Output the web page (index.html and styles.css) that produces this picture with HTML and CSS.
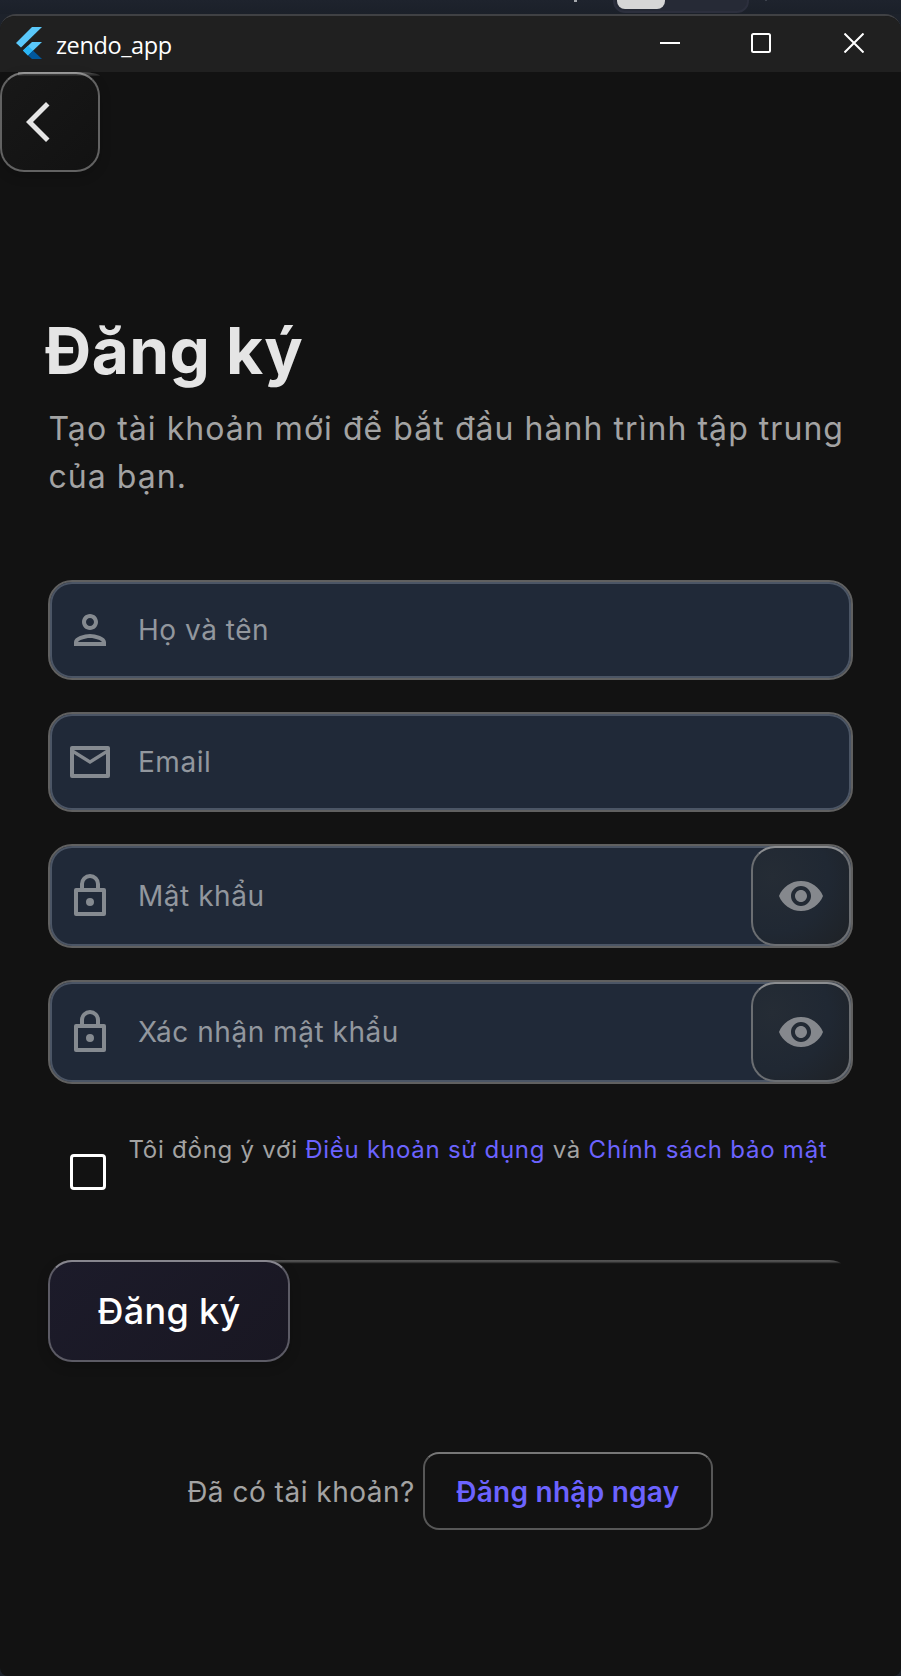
FILE: index.html
```html
<!DOCTYPE html>
<html lang="vi">
<head>
<meta charset="utf-8">
<title>zendo_app</title>
<link rel="stylesheet" href="styles.css">
</head>
<body>
<div class="desktop">
  <span class="desk-mark"></span>
  <span class="desk-mark desk-mark-right"></span>
  <div class="desk-pill"><span class="desk-thumb"></span></div>
</div>
<div class="window">
  <header class="titlebar">
    <svg class="logo" width="26" height="32" viewBox="0 0 26 32">
      <path fill="#5ac8fa" d="M16 0h10L5 20.500 0 16z"/>
      <path fill="#5ac8fa" d="M16 15h10L12 28.500 7 23.500z"/>
      <path fill="#29b6f6" d="M12 18.700l5 4.900-5 4.900-5-4.900z"/>
      <path fill="#01579b" d="M12 28.500l5-4.900 9 8.400H16z"/>
    </svg>
    <span class="app-name">zendo_app</span>
    <div class="controls">
      <svg width="20" height="20" viewBox="0 0 20 20"><path d="M0 10h20"/></svg>
      <svg width="20" height="20" viewBox="0 0 20 20"><rect x="1" y="1" width="18" height="18" rx="1.500"/></svg>
      <svg width="20" height="20" viewBox="0 0 20 20"><path d="M.5.5l19 19M19.500.5l-19 19"/></svg>
    </div>
  </header>
  <main class="content">
    <button class="glass back" aria-label="Back">
      <svg width="24" height="40" viewBox="0 0 24 40"><path fill="#e5e5e5" d="M23.500 3.500L20 0 0 20l20 20 3.500-3.500L7 20z"/></svg>
    </button>
    <div class="form">
      <h1 class="title">Đăng ký</h1>
      <p class="subtitle">Tạo tài khoản mới để bắt đầu hành trình tập trung của bạn.</p>
      <div class="fields">
        <div class="field">
          <svg class="icon" width="48" height="48" viewBox="0 0 24 24"><path d="M12 6c1.100 0 2 .9 2 2s-.9 2-2 2-2-.9-2-2 .9-2 2-2m0 10c2.700 0 5.800 1.290 6 2H6c.23-.72 3.310-2 6-2m0-12C9.790 4 8 5.790 8 8s1.790 4 4 4 4-1.790 4-4-1.790-4-4-4zm0 10c-2.670 0-8 1.340-8 4v2h16v-2c0-2.660-5.330-4-8-4z"/></svg>
          <span class="hint">Họ và tên</span>
        </div>
        <div class="field">
          <svg class="icon" width="48" height="48" viewBox="0 0 24 24"><path fill-rule="evenodd" d="M3 4h18q1 0 1 1v14q0 1-1 1H3q-1 0-1-1V5q0-1 1-1zM4 8v10h16V8l-8 5zM4 6l8 5 8-5z"/></svg>
          <span class="hint">Email</span>
        </div>
        <div class="field tall">
          <svg class="icon" width="48" height="48" viewBox="0 0 24 24"><path fill-rule="evenodd" d="M19 8h-2V6A5 5 0 0 0 7 6v2H5q-1 0-1 1v12q0 1 1 1h14q1 0 1-1V9q0-1-1-1zM9 6a3 3 0 0 1 6 0v2H9zM18 20H6V10h12zM12 17a2 2 0 1 0 0-4 2 2 0 0 0 0 4z"/></svg>
          <span class="hint">Mật khẩu</span>
          <button class="glass reveal" aria-label="Show"><svg width="48" height="48" viewBox="0 0 24 24"><path d="M12 4.500C7 4.500 2.730 7.610 1 12c1.730 4.390 6 7.500 11 7.500s9.270-3.110 11-7.500c-1.730-4.390-6-7.500-11-7.500zM12 17c-2.760 0-5-2.240-5-5s2.240-5 5-5 5 2.240 5 5-2.240 5-5 5zm0-8c-1.660 0-3 1.340-3 3s1.340 3 3 3 3-1.340 3-3-1.340-3-3-3z"/></svg></button>
        </div>
        <div class="field tall">
          <svg class="icon" width="48" height="48" viewBox="0 0 24 24"><path fill-rule="evenodd" d="M19 8h-2V6A5 5 0 0 0 7 6v2H5q-1 0-1 1v12q0 1 1 1h14q1 0 1-1V9q0-1-1-1zM9 6a3 3 0 0 1 6 0v2H9zM18 20H6V10h12zM12 17a2 2 0 1 0 0-4 2 2 0 0 0 0 4z"/></svg>
          <span class="hint">Xác nhận mật khẩu</span>
          <button class="glass reveal" aria-label="Show"><svg width="48" height="48" viewBox="0 0 24 24"><path d="M12 4.500C7 4.500 2.730 7.610 1 12c1.730 4.390 6 7.500 11 7.500s9.270-3.110 11-7.500c-1.730-4.390-6-7.500-11-7.500zM12 17c-2.760 0-5-2.240-5-5s2.240-5 5-5 5 2.240 5 5-2.240 5-5 5zm0-8c-1.660 0-3 1.340-3 3s1.340 3 3 3 3-1.340 3-3-1.340-3-3-3z"/></svg></button>
        </div>
      </div>
      <div class="terms">
        <span class="checkbox"></span>
        <p class="terms-text">Tôi đồng ý với <a>Điều khoản sử dụng</a> và <a>Chính sách bảo mật</a></p>
      </div>
      <div class="submit-row">
        <button class="glass submit">Đăng ký</button>
      </div>
      <div class="login-row">
        <span class="login-text">Đã có tài khoản?</span>
        <button class="glass login">Đăng nhập ngay</button>
      </div>
    </div>
  </main>
</div>
</body>
</html>
```

FILE: styles.css
```css
* { box-sizing: border-box; }
body {
  margin: 0;
  width: 901px;
  height: 1676px;
  overflow: hidden;
  background: #1d222b;
  font-family: Inter, "Noto Sans", sans-serif;
}
button {
  font-family: inherit;
  margin: 0;
  padding: 0;
}
.desktop {
  position: relative;
  height: 14px;
  background: linear-gradient(#1e232d, #1b2029);
}
.desk-pill {
  position: absolute;
  left: 613px;
  top: -20px;
  width: 136px;
  height: 33px;
  border: 2px solid #2c2f3d;
  border-radius: 12px;
  background: #262a36;
}
.desk-thumb {
  position: absolute;
  left: 2px;
  top: 0;
  width: 48px;
  height: 27px;
  border-radius: 8px;
  background: #d6d6d6;
}
.desk-mark {
  position: absolute;
  left: 574px;
  top: 0;
  width: 3px;
  height: 2px;
  background: #a5a8ad;
}
.desk-mark-right {
  left: 765px;
  width: 2px;
  height: 1px;
  background: #3c414c;
}
.window {
  height: 1662px;
  border-top: 2px solid #404144;
  border-radius: 16px 16px 8px 8px;
  background: #121212;
  overflow: hidden;
}
.titlebar {
  display: flex;
  align-items: center;
  height: 56px;
  padding-left: 16px;
  background: #202020;
}
.logo { margin-top: -2px; }
.app-name {
  margin: 1px 0 0 14px;
  color: #fff;
  font: 23.500px/32px "Open Sans", "Noto Sans", sans-serif;
  letter-spacing: -0.4px;
}
.controls {
  display: flex;
  gap: 73px;
  margin: 0 37px 2px auto;
}
.controls svg {
  fill: none;
  stroke: #fff;
  stroke-width: 2;
}
.controls svg:nth-child(2) { margin-left: -2px; }
.content { height: 1604px; }
.glass {
  display: flex;
  align-items: center;
  border: 2px solid #626262;
  border-radius: 24px;
  box-shadow: 0 4px 12px rgba(0, 0, 0, .18);
}
.back {
  position: relative;
  width: 100px;
  height: 100px;
  padding-left: 24px;
  border-top-color: #747474;
  background: linear-gradient(135deg, #181818, #121212);
}
/* light edge running past the rounded corner */
.back::before {
  content: "";
  position: absolute;
  top: -2px;
  left: 16px;
  width: 82px;
  height: 4px;
  border-top-right-radius: 24px 4px;
  background: linear-gradient(rgba(255, 255, 255, .3), rgba(255, 255, 255, .06));
}
.form { padding: 0 48px; }
.title {
  margin: 141px 0 0 -3px;
  color: #e5e5e5;
  font-size: 64px;
  font-weight: 700;
  line-height: 76px;
  letter-spacing: .45px;
}
.subtitle {
  margin: 16px -8px 0 .5px;
  color: #a3a3a3;
  font-size: 32px;
  line-height: 48px;
  letter-spacing: 1.05px;
}
.fields {
  display: flex;
  flex-direction: column;
  gap: 32px;
  margin-top: 79px;
}
.field {
  display: flex;
  align-items: center;
  height: 100px;
  padding-left: 16px;
  border: 2px solid #606060;
  border-radius: 24px;
  background: #202938;
  box-shadow: inset 0 0 0 2px #4b5565;
}
.tall { height: 104px; }
.icon { fill: #858a90; }
.hint {
  margin-left: 24px;
  color: #92979e;
  font-size: 28px;
  line-height: 40px;
  letter-spacing: .53px;
}
.reveal {
  justify-content: center;
  width: 100px;
  height: 100px;
  margin-left: auto;
  border-color: #6b6e72;
  border-top-color: #8b8d90;
  background: radial-gradient(circle at 20% 30%, #252c35, #202833 55%, #1e2125);
  box-shadow: none;
}
.reveal svg { fill: #85888d; }
.terms {
  display: flex;
  height: 130px;
  margin-top: 46px;
}
.checkbox {
  width: 36px;
  height: 36px;
  margin: 24px 0 0 22px;
  border: 3px solid #fff;
  border-radius: 4px;
}
.terms-text {
  margin: 2px 0 0 22.500px;
  color: #a3a3a3;
  font-size: 24px;
  line-height: 36px;
  letter-spacing: .75px;
  white-space: nowrap;
}
.terms-text a { color: #6c63ff; }
.submit-row {
  height: 102px;
  border-radius: 24px;
  background: linear-gradient(#575757, #484848 2px, #1e1e1e 3px, transparent 4px) no-repeat 0 0 / 793px 4px;
}
.submit {
  justify-content: center;
  width: 242px;
  height: 102px;
  border-color: #5c5b65;
  border-top-color: #87868e;
  background: linear-gradient(135deg, #1c1b2a, #191722);
  color: #fff;
  font-size: 36px;
  font-weight: 500;
  letter-spacing: .3px;
}
.login-row {
  display: flex;
  align-items: center;
  justify-content: center;
  gap: 8px;
  margin: 90px 1px 0 0;
}
.login-text {
  padding-top: 2px;
  color: #a3a3a3;
  font-size: 28px;
  letter-spacing: .5px;
}
.login {
  justify-content: center;
  width: 290px;
  height: 78px;
  padding-top: 2px;
  border-color: #575757;
  border-top-color: #777;
  border-radius: 16px;
  background: #121212;
  box-shadow: none;
  color: #6c63ff;
  font-size: 28px;
  font-weight: 600;
  letter-spacing: .25px;
}
```
